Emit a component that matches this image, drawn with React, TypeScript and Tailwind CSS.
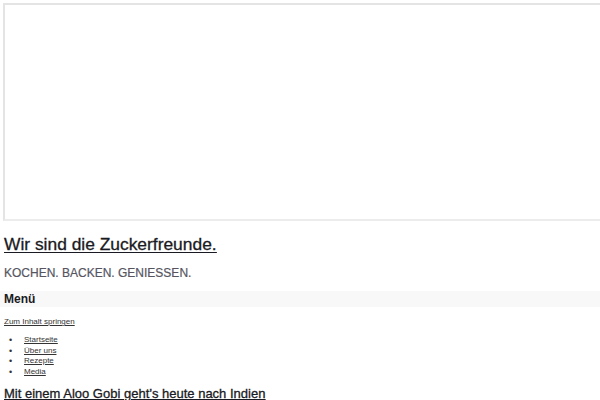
const items = ["Startseite", "Über uns", "Rezepte", "Media"];

export default function App() {
  return (
    <div className="w-[600px] h-[400px] overflow-hidden bg-white text-[#222]" style={{ fontFamily: '"Liberation Sans", Arial, sans-serif' }}>
      <div className="ml-[3px] mt-[3px] w-[620px] h-[218px] border-2 border-t-[#e4e4e4] border-l-[#e4e4e4] border-b-[#ececec] border-r-[#ececec] bg-white" />
      <div className="pl-[4px]">
        <h1 className="mt-[13px] text-[17.4px] leading-[20px] underline underline-offset-2 text-[#1a1a22] [-webkit-text-stroke:0.3px]">
          <a href="#">Wir sind die Zuckerfreunde.</a>
        </h1>
        <p className="mt-[12px] text-[12px] leading-[14px] text-[#55555f] [-webkit-text-stroke:0.2px]">KOCHEN. BACKEN. GENIESSEN.</p>
      </div>
      <div className="mt-[11px] h-[16px] bg-[#f8f8f8] pl-[4px] flex items-center">
        <span className="text-[12px] font-bold text-[#1a1a22]">Menü</span>
      </div>
      <div className="pl-[4px] mt-[10px] text-[8px] leading-[10px] text-[#333]">
        <a href="#" className="underline">Zum Inhalt springen</a>
        <ul className="mt-[8px]">
          {items.map((t) => (
            <li key={t} className="flex h-[10.5px] items-center leading-[10.5px]">
              <span className="w-[20px] pl-[5px] text-[9px]">•</span>
              <a href="#" className="underline">{t}</a>
            </li>
          ))}
        </ul>
      </div>
      <h2 className="pl-[4px] mt-[9px] text-[13px] leading-[15px] underline underline-offset-1 text-[#1a1a22] [-webkit-text-stroke:0.3px]">
        <a href="#">Mit einem Aloo Gobi geht’s heute nach Indien</a>
      </h2>
    </div>
  );
}
